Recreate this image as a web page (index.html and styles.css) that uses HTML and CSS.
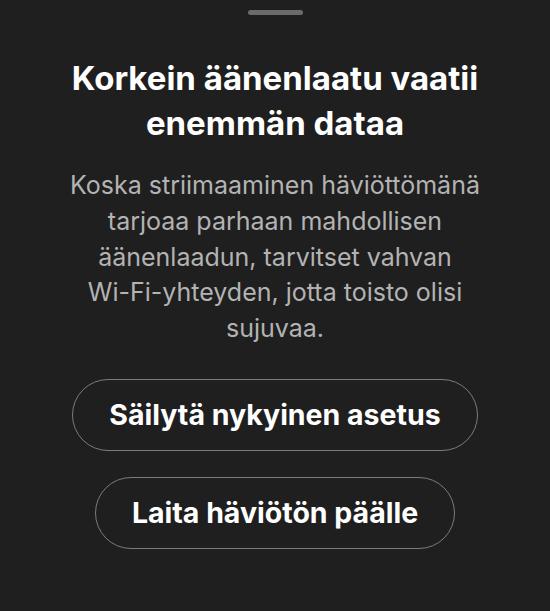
FILE: index.html
```html
<!DOCTYPE html>
<html lang="fi">
  <head>
    <meta charset="UTF-8" />
    <meta name="viewport" content="width=device-width, initial-scale=1.0" />
    <title>Häviötön äänenlaatu</title>
    <link rel="stylesheet" href="styles.css">
  </head>
  <body>
    <div class="sheet">
      <div class="handle"></div>
      <h1 class="title">Korkein äänenlaatu vaatii<br>enemmän dataa</h1>
      <p class="message">
        Koska striimaaminen häviöttömänä<br>
        tarjoaa parhaan mahdollisen<br>
        äänenlaadun, tarvitset vahvan<br>
        Wi-Fi-yhteyden, jotta toisto olisi<br>
        sujuvaa.
      </p>
      <div class="actions">
        <button class="pill">Säilytä nykyinen asetus</button>
        <button class="pill">Laita häviötön päälle</button>
      </div>
    </div>
  </body>
</html>
```

FILE: styles.css
```css
/* Bottom sheet */
body {
  margin: 0;
  background-color: #1f1f1f;
  font-family: Inter, "Noto Sans", sans-serif;
  color: white;
}

.sheet {
  display: flex;
  flex-direction: column;
  align-items: center;
  padding: 10px 40px 0;
  height: 611px;
  box-sizing: border-box;
}

/* Drag handle */
.handle {
  width: 55px;
  height: 5px;
  border-radius: 3px;
  background-color: #6b6b6b;
}

.title {
  margin: 41px 0 0;
  font-size: 33px;
  line-height: 45px;
  font-weight: 700;
  text-align: center;
}

.message {
  margin: 22px 0 0;
  font-size: 25px;
  line-height: 35.75px;
  color: #b3b3b3;
  text-align: center;
}

/* Buttons */
.actions {
  display: flex;
  flex-direction: column;
  align-items: center;
  gap: 26px;
  margin-top: 32px;
}

.pill {
  height: 72px;
  padding: 0 36px;
  border: 1px solid #7c7c7c;
  border-radius: 36px;
  background: transparent;
  color: white;
  font-family: inherit;
  font-size: 28.5px;
  font-weight: 700;
  cursor: pointer;
}
```
